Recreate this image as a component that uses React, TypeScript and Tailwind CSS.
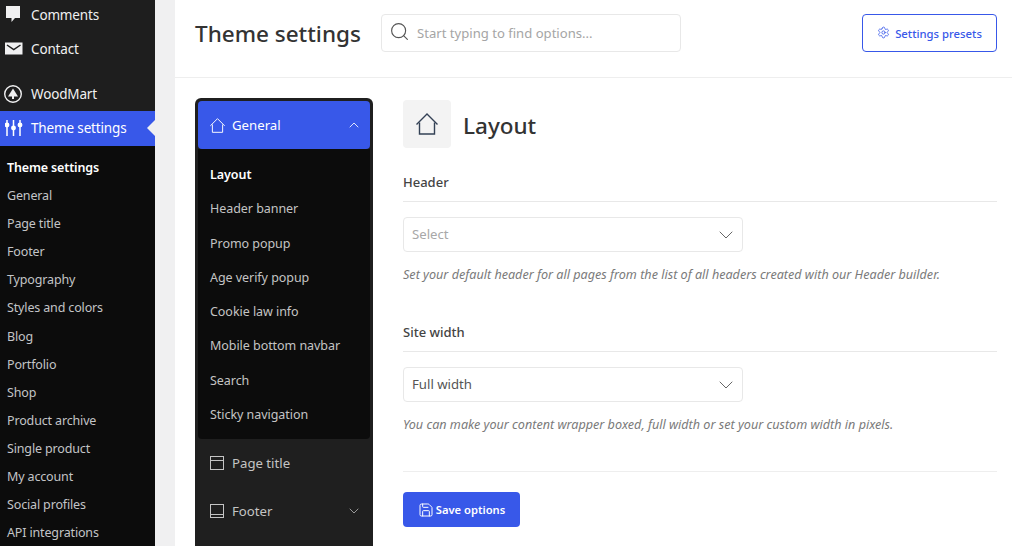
import { ChevronDown, ChevronUp, Save, Search, Settings } from 'lucide-react';

const font = { fontFamily: '"Noto Sans", "Open Sans", sans-serif' };

const subMenu = ['General', 'Page title', 'Footer', 'Typography', 'Styles and colors', 'Blog', 'Portfolio', 'Shop', 'Product archive', 'Single product', 'My account', 'Social profiles', 'API integrations'];
const generalItems = ['Header banner', 'Promo popup', 'Age verify popup', 'Cookie law info', 'Mobile bottom navbar', 'Search', 'Sticky navigation'];

const HomeIcon = ({ className }: { className: string }) => (
  <svg viewBox="0 0 22 22" fill="none" stroke="currentColor" strokeWidth="1.400" className={className}>
    <path d="M0.500 11.500 11 1l10.500 10.500" />
    <path d="M3.500 9.500V21h15V9.500" />
  </svg>
);

const App = () => {
  return (
    <div className="flex h-[546px] w-[1012px] overflow-hidden bg-white" style={font}>
      {/* wp admin menu */}
      <aside className="w-[155px] shrink-0 bg-[#1e1e1e] text-[13.5px] tracking-[-0.15px] text-[#f0f0f1]">
        <div className="-mt-[2px] flex h-[34px] items-center gap-[6px] pl-[5px]">
          <svg viewBox="0 0 20 20" className="h-[20px] w-[20px]" fill="#f0f0f1">
            <path d="M1 1h14v12h-5l-3.500 4v-4H1z" />
          </svg>
          <span>Comments</span>
        </div>
        <div className="flex h-[34px] items-center gap-[6px] pl-[5px]">
          <svg viewBox="0 0 20 20" className="h-[20px] w-[20px]">
            <rect x="0" y="3.500" width="17.500" height="12" fill="#f0f0f1" />
            <path d="M2 6 8.750 10.500l6.750-4.500" fill="none" stroke="#1e1e1e" strokeWidth="1.500" />
          </svg>
          <span>Contact</span>
        </div>
        <div className="mt-[11px] flex h-[34px] items-center gap-[6px] pl-[5px]">
          <svg viewBox="0 0 20 20" className="h-[20px] w-[20px] -translate-x-[1px]" fill="none">
            <circle cx="9" cy="10" r="8.300" stroke="#f0f0f1" strokeWidth="1.400" />
            <path d="M9 4.500 14 12.500H10v2.500H8v-2.500H4z" fill="#f0f0f1" />
          </svg>
          <span>WoodMart</span>
        </div>
        <div className="relative flex h-[35px] items-center gap-[6px] bg-[#3858e9] pl-[5px] text-white">
          <svg viewBox="0 0 20 20" className="h-[20px] w-[20px] -translate-y-[1px]" fill="none" stroke="#fff" strokeWidth="1.500">
            <path d="M2 2v16M8.500 2v16M15 2v16" />
            <circle cx="2" cy="7" r="1.700" fill="#fff" />
            <circle cx="8.500" cy="10" r="1.700" fill="#fff" />
            <circle cx="15" cy="7" r="1.700" fill="#fff" />
          </svg>
          <span>Theme settings</span>
          <span className="absolute right-0 top-[9px] h-0 w-0 border-y-[8px] border-r-[8px] border-y-transparent border-r-[#f0f0f1]" />
        </div>
        <div className="h-full bg-[#0c0c0c] pt-[8px] text-[12.5px] leading-[28.1px] text-[#c3c4c7]">
          <div className="pl-[7px] font-semibold text-white">Theme settings</div>
          {subMenu.map((item) => (
            <div key={item} className="pl-[7px]">{item}</div>
          ))}
        </div>
      </aside>

      <div className="w-[20px] shrink-0 bg-[#f0f0f1]" />

      {/* panel */}
      <main className="min-w-0 flex-1">
        <header className="flex h-[78px] items-center border-b border-[#eeeeee] pb-[12px] pl-[20px] pr-[15px]">
          <h1 className="w-[166px] whitespace-nowrap pt-[2px] text-[22.5px] font-medium text-[#333333]">Theme settings</h1>
          <div className="ml-[20px] flex h-[38px] w-[300px] items-center gap-[7px] rounded-[4px] border border-[#e8e8e8] pl-[7px]">
            <Search className="h-[21px] w-[21px] -translate-y-[1px] text-[#555555]" strokeWidth={1.300} />
            <span className="pt-[3px] text-[13.1px] text-[#a5a5a5]">Start typing to find options...</span>
          </div>
          <button className="ml-auto flex h-[38px] w-[135px] items-center justify-center gap-[5px] rounded-[4px] border border-[#3858e9] text-[11.3px] font-medium text-[#3858e9]">
            <Settings className="h-[13px] w-[13px]" strokeWidth={1.500} />
            <span className="pt-[3px]">Settings presets</span>
          </button>
        </header>

        <div className="flex pl-[20px] pr-[15px] pt-[20px]">
          {/* options nav */}
          <nav className="h-[460px] w-[178px] shrink-0 rounded-t-[6px] bg-[#1f1f1f] px-[3px] pt-[3px] text-[13.2px] text-[#c4c4c4]">
            <div className="flex h-[48px] items-center rounded-[4px] bg-[#3858e9] pl-[12px] pr-[8px] text-white">
              <HomeIcon className="h-[15px] w-[15px]" />
              <span className="ml-[7px] pt-[2px]">General</span>
              <ChevronUp className="ml-auto h-[16px] w-[16px] text-[#dfe4fc]" strokeWidth={1.500} />
            </div>
            <div className="rounded-b-[4px] bg-[#0c0c0c] pb-[7px] pl-[12px] pt-[9px] text-[12.5px] leading-[34.3px] tracking-[-0.05px] text-[#c4c4c4]">
              <div className="font-semibold text-white">Layout</div>
              {generalItems.map((item) => (
                <div key={item}>{item}</div>
              ))}
            </div>
            <div className="flex h-[48px] items-center pl-[12px] pr-[8px]">
              <svg viewBox="0 0 14 14" className="h-[14px] w-[14px]" fill="none" stroke="currentColor">
                <rect x="0.500" y="0.500" width="13" height="13" />
                <path d="M0.500 4.500h13" />
              </svg>
              <span className="ml-[8px] pt-[2px]">Page title</span>
            </div>
            <div className="flex h-[48px] items-center pl-[12px] pr-[8px]">
              <svg viewBox="0 0 14 14" className="h-[14px] w-[14px]" fill="none" stroke="currentColor">
                <rect x="0.500" y="0.500" width="13" height="13" />
                <path d="M0.500 10.500h13" />
              </svg>
              <span className="ml-[8px] pt-[2px]">Footer</span>
              <ChevronDown className="ml-auto h-[16px] w-[16px] text-[#999999]" strokeWidth={1.500} />
            </div>
          </nav>

          {/* options */}
          <section className="ml-[30px] min-w-0 flex-1 pt-[2px]">
            <div className="flex items-center gap-[12px]">
              <div className="flex h-[48px] w-[48px] items-center justify-center rounded-[4px] bg-[#f3f3f3] text-[#334155]">
                <HomeIcon className="h-[22px] w-[22px]" />
              </div>
              <h2 className="pt-[3px] text-[22.5px] font-medium text-[#333333]">Layout</h2>
            </div>

            <h3 className="mt-[25px] border-b border-[#e8e8e8] pb-[10px] text-[13px] font-medium leading-[18px] text-[#444444]">Header</h3>
            <div className="mt-[15px] flex h-[35px] w-[340px] items-center justify-between rounded-[4px] border border-[#e8e8e8] pl-[8px] pr-[4px] text-[13.2px] text-[#a8a8a8]">
              Select
              <ChevronDown className="h-[24px] w-[24px] text-[#666666]" strokeWidth={1} />
            </div>
            <p className="mt-[14px] text-[12.6px] italic leading-[18px] text-[#7a7a7a]">Set your default header for all pages from the list of all headers created with our Header builder.</p>

            <h3 className="mt-[39px] border-b border-[#e8e8e8] pb-[10px] text-[13px] font-medium leading-[18px] text-[#444444]">Site width</h3>
            <div className="mt-[15px] flex h-[35px] w-[340px] items-center justify-between rounded-[4px] border border-[#e8e8e8] pl-[8px] pr-[4px] text-[13.2px] text-[#555555]">
              <span className="pt-[1px]">Full width</span>
              <ChevronDown className="h-[24px] w-[24px] text-[#666666]" strokeWidth={1} />
            </div>
            <p className="mt-[14px] border-b border-[#eeeeee] pb-[37px] text-[12.6px] italic leading-[18px] text-[#7a7a7a]">You can make your content wrapper boxed, full width or set your custom width in pixels.</p>

            <button className="mt-[20px] flex h-[35px] w-[117px] items-center justify-center gap-[2px] rounded-[4px] bg-[#3858e9] text-[11.2px] font-semibold text-white">
              <Save className="h-[16px] w-[16px]" strokeWidth={1.500} />
              <span className="pt-[1px]">Save options</span>
            </button>
          </section>
        </div>
      </main>
    </div>
  );
};

export default App;
